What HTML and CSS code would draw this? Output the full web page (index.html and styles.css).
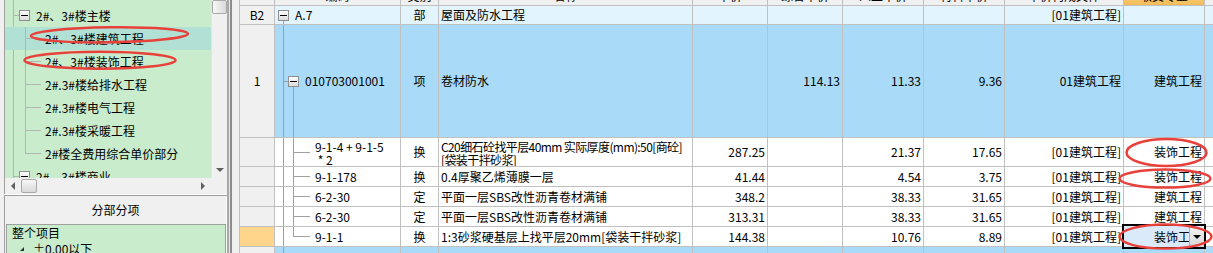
FILE: index.html
```html
<!DOCTYPE html>
<html>
<head>
    <meta charset="utf-8">
    <title>分部分项</title>
    <link rel="stylesheet" href="styles.css">
</head>
<body>
<div class="app">
    <aside class="side">
        <div class="tree-pane">
            <div class="tree-main">
                <div class="tree">
                    <div class="node root"><span class="toggle"></span>2#、3#楼主楼</div>
                    <div class="children">
                        <div class="node leaf sel">2#、3#楼建筑工程</div>
                        <div class="node leaf">2#、3#楼装饰工程</div>
                        <div class="node leaf">2#.3#楼给排水工程</div>
                        <div class="node leaf">2#.3#楼电气工程</div>
                        <div class="node leaf">2#.3#楼采暖工程</div>
                        <div class="node leaf">2#楼全费用综合单价部分</div>
                    </div>
                    <div class="node root"><span class="toggle"></span>2#、3#楼商业</div>
                </div>
                <div class="vscroll">
                    <div class="vthumb"></div>
                    <div class="vtrack"></div>
                    <div class="sbtn"><span class="arr-down"></span></div>
                </div>
            </div>
            <div class="hscroll">
                <div class="sbtn"><span class="arr-left"></span></div>
                <div class="hthumb"></div>
                <div class="htrack"></div>
                <div class="sbtn"><span class="arr-right"></span></div>
                <div class="corner"></div>
            </div>
        </div>
        <div class="side-gap"></div>
        <div class="fb-pane">
            <div class="fb-title">分部分项</div>
            <div class="fb-list">
                <div class="fb-item">整个项目</div>
                <div class="fb-item sub"><span class="arr-open"></span>±0.00以下</div>
            </div>
        </div>
    </aside>

    <div class="splitter"></div>

    <main class="grid">
        <div class="row head">
            <div class="cell c-rh"></div>
            <div class="cell c-code ctr">编码</div>
            <div class="cell c-type ctr">类别</div>
            <div class="cell c-name ctr">名称</div>
            <div class="cell c-n1 ctr">单价</div>
            <div class="cell c-n2 ctr">综合单价</div>
            <div class="cell c-n3 ctr">人工单价</div>
            <div class="cell c-n4 ctr">材料单价</div>
            <div class="cell c-file ctr">单价构成文件</div>
            <div class="cell c-spec ctr hd-on">取费专业</div>
            <div class="cell c-x"></div>
        </div>

        <div class="row sec">
            <div class="cell c-rh ctr">B2</div>
            <div class="cell c-code code-sec"><span class="toggle"></span>A.7</div>
            <div class="cell c-type ctr">部</div>
            <div class="cell c-name">屋面及防水工程</div>
            <div class="cell c-n1"></div>
            <div class="cell c-n2"></div>
            <div class="cell c-n3"></div>
            <div class="cell c-n4"></div>
            <div class="cell c-file num">[01建筑工程]</div>
            <div class="cell c-spec"></div>
            <div class="cell c-x"></div>
        </div>

        <div class="row item">
            <div class="cell c-rh ctr">1</div>
            <div class="cell c-code code-item"><span class="toggle"></span>010703001001</div>
            <div class="cell c-type ctr">项</div>
            <div class="cell c-name">卷材防水</div>
            <div class="cell c-n1"></div>
            <div class="cell c-n2 num">114.13</div>
            <div class="cell c-n3 num">11.33</div>
            <div class="cell c-n4 num">9.36</div>
            <div class="cell c-file num">01建筑工程</div>
            <div class="cell c-spec num">建筑工程</div>
            <div class="cell c-x"></div>
        </div>

        <div class="row tall">
            <div class="cell c-rh"></div>
            <div class="cell c-code code-leaf wrap">9-1-4 + 9-1-5<br>&nbsp;* 2</div>
            <div class="cell c-type ctr">换</div>
            <div class="cell c-name wrap tight">C20细石砼找平层40mm 实际厚度(mm):50[商砼]<br>[袋装干拌砂浆]</div>
            <div class="cell c-n1 num">287.25</div>
            <div class="cell c-n2"></div>
            <div class="cell c-n3 num">21.37</div>
            <div class="cell c-n4 num">17.65</div>
            <div class="cell c-file num">[01建筑工程]</div>
            <div class="cell c-spec num">装饰工程</div>
            <div class="cell c-x"></div>
        </div>

        <div class="row">
            <div class="cell c-rh"></div>
            <div class="cell c-code code-leaf">9-1-178</div>
            <div class="cell c-type ctr">换</div>
            <div class="cell c-name">0.4厚聚乙烯薄膜一层</div>
            <div class="cell c-n1 num">41.44</div>
            <div class="cell c-n2"></div>
            <div class="cell c-n3 num">4.54</div>
            <div class="cell c-n4 num">3.75</div>
            <div class="cell c-file num">[01建筑工程]</div>
            <div class="cell c-spec num">装饰工程</div>
            <div class="cell c-x"></div>
        </div>

        <div class="row">
            <div class="cell c-rh"></div>
            <div class="cell c-code code-leaf">6-2-30</div>
            <div class="cell c-type ctr">定</div>
            <div class="cell c-name">平面一层SBS改性沥青卷材满铺</div>
            <div class="cell c-n1 num">348.2</div>
            <div class="cell c-n2"></div>
            <div class="cell c-n3 num">38.33</div>
            <div class="cell c-n4 num">31.65</div>
            <div class="cell c-file num">[01建筑工程]</div>
            <div class="cell c-spec num">建筑工程</div>
            <div class="cell c-x"></div>
        </div>

        <div class="row">
            <div class="cell c-rh"></div>
            <div class="cell c-code code-leaf">6-2-30</div>
            <div class="cell c-type ctr">定</div>
            <div class="cell c-name">平面一层SBS改性沥青卷材满铺</div>
            <div class="cell c-n1 num">313.31</div>
            <div class="cell c-n2"></div>
            <div class="cell c-n3 num">38.33</div>
            <div class="cell c-n4 num">31.65</div>
            <div class="cell c-file num">[01建筑工程]</div>
            <div class="cell c-spec num">建筑工程</div>
            <div class="cell c-x"></div>
        </div>

        <div class="row">
            <div class="cell c-rh cur"></div>
            <div class="cell c-code code-last">9-1-1</div>
            <div class="cell c-type ctr">换</div>
            <div class="cell c-name">1:3砂浆硬基层上找平层20mm[袋装干拌砂浆]</div>
            <div class="cell c-n1 num">144.38</div>
            <div class="cell c-n2"></div>
            <div class="cell c-n3 num">10.76</div>
            <div class="cell c-n4 num">8.89</div>
            <div class="cell c-file num">[01建筑工程]</div>
            <div class="cell c-spec edit">
                <div class="combo">装饰工程<span class="combo-btn"><span class="arr-down dark"></span></span></div>
            </div>
            <div class="cell c-x"></div>
        </div>

        <div class="row item">
            <div class="cell c-rh"></div>
            <div class="cell c-code code-cont"></div>
            <div class="cell c-type"></div>
            <div class="cell c-name"></div>
            <div class="cell c-n1"></div>
            <div class="cell c-n2"></div>
            <div class="cell c-n3"></div>
            <div class="cell c-n4"></div>
            <div class="cell c-file"></div>
            <div class="cell c-spec"></div>
            <div class="cell c-x"></div>
        </div>
    </main>

    <!-- 手绘标注 -->
    <svg class="marks" width="1213" height="253" viewBox="0 0 1213 253">
        <ellipse cx="109.5" cy="34.8" rx="78.5" ry="7.5" transform="rotate(-0.8 109.5 34.8)"/>
        <ellipse cx="100" cy="60.3" rx="75.5" ry="8.5"/>
        <ellipse cx="1166.5" cy="152.5" rx="40" ry="13.5"/>
        <ellipse cx="1165" cy="178.6" rx="45.5" ry="9"/>
        <ellipse cx="1165.5" cy="236.6" rx="46" ry="12"/>
    </svg>
</div>
</body>
</html>
```

FILE: styles.css
```css
* {
    margin: 0;
    padding: 0;
    box-sizing: border-box;
}

body {
    width: 1213px;
    height: 253px;
    overflow: hidden;
    background: #f0f0f0;
    font-family: "Noto Sans CJK SC", "Noto Sans", sans-serif;
    font-size: 12px;
    line-height: 14px;
    color: #000;
}

.app {
    position: relative;
    display: flex;
    height: 253px;
}

/* 左侧树 */
.side {
    width: 227px;
    flex: none;
    padding-left: 4px;
    display: flex;
    flex-direction: column;
}

.tree-pane {
    border-left: 1px solid #a0a0a0;
}

.tree-main {
    display: flex;
    height: 178px;
}

.tree {
    flex: 1;
    padding-top: 4px;
    overflow: hidden;
    background: linear-gradient(#b4b4b4, #b4b4b4) 8px 0 / 1px 100% no-repeat, #c9eccc;
}

.node {
    height: 23px;
    display: flex;
    align-items: center;
    white-space: nowrap;
}

.node.root {
    padding-left: 14px;
    background: linear-gradient(#b4b4b4, #b4b4b4) 8px 50% / 6px 1px no-repeat;
}

.toggle {
    width: 11px;
    height: 11px;
    flex: none;
    border: 1px solid #8e8f8f;
    background: linear-gradient(#ffffff, #dcdcdc);
    display: flex;
    align-items: center;
    justify-content: center;
    margin-right: 6px;
}

.toggle::before {
    content: "";
    width: 7px;
    height: 1px;
    background: #000;
}

.children {
    background: linear-gradient(#b4b4b4, #b4b4b4) 20px 0 / 1px calc(100% - 11px) no-repeat;
}

.node.leaf {
    padding-left: 40px;
    background: linear-gradient(#b4b4b4, #b4b4b4) 20px 50% / 16px 1px no-repeat;
}

.node.leaf.sel {
    background:
        linear-gradient(#b4b4b4, #b4b4b4) 20px 50% / 16px 1px no-repeat,
        linear-gradient(#b4b4b4, #b4b4b4) 20px 0 / 1px 100% no-repeat,
        #b1e1d4;
}

/* 滚动条 */
.vscroll {
    width: 16px;
    display: flex;
    flex-direction: column;
    background: #f0f0f0;
    border-left: 1px solid #e4e4e4;
}

.vthumb {
    height: 14px;
    border: 1px solid #a9a9a9;
    border-radius: 2px;
    background: linear-gradient(to right, #f7f7f7, #d9d9d9);
}

.vtrack,
.htrack {
    flex: 1;
}

.sbtn {
    width: 16px;
    height: 16px;
    display: flex;
    align-items: center;
    justify-content: center;
}

.hscroll {
    height: 16px;
    display: flex;
    background: #f0f0f0;
}

.hthumb {
    width: 16px;
    margin: 1px 0;
    border: 1px solid #a9a9a9;
    border-radius: 2px;
    background: linear-gradient(#f7f7f7, #d9d9d9);
}

.corner {
    width: 16px;
}

.arr-down {
    border-left: 4px solid transparent;
    border-right: 4px solid transparent;
    border-top: 4px solid #606060;
}

.arr-down.dark {
    border-top-color: #000;
}

.arr-left {
    border-top: 4px solid transparent;
    border-bottom: 4px solid transparent;
    border-right: 4px solid #606060;
}

.arr-right {
    border-top: 4px solid transparent;
    border-bottom: 4px solid transparent;
    border-left: 4px solid #606060;
}

.side-gap {
    height: 7px;
    border-top: 1px solid #ffffff;
    border-bottom: 1px solid #a0a0a0;
    background: #c4dcc6;
}

/* 分部分项 */
.fb-pane {
    flex: 1;
    display: flex;
    flex-direction: column;
    border-left: 1px solid #a0a0a0;
    border-right: 1px solid #ffffff;
}

.fb-title {
    height: 28px;
    display: flex;
    align-items: center;
    justify-content: center;
}

.fb-list {
    flex: 1;
    margin-left: 1px;
    border: 1px solid #a0a0a0;
    background: #c9eccc;
    padding: 0 5px;
}

.fb-item {
    height: 16px;
    display: flex;
    align-items: center;
    white-space: nowrap;
}

.fb-item.sub {
    padding-left: 8px;
}

.arr-open {
    border-left: 4px solid transparent;
    border-bottom: 4px solid #333;
    margin-right: 9px;
}

.splitter {
    width: 12px;
    flex: none;
    background: linear-gradient(to right, #a8a8a8 0 2px, #e8e8e8 2px 3px, #8c8c8c 3px 5px, #f0f0f0 5px);
}

/* 表格 */
.grid {
    flex: 1;
    overflow: hidden;
    border-left: 1px solid #c0c0c0;
    background: #ffffff;
}

.row {
    display: flex;
    height: 20px;
    border-bottom: 1px solid #c0c0c0;
}

.row.head {
    margin-top: -14px;
    background: #f0f0f0;
}

.row.sec {
    height: 19px;
    background: #e2f4fd;
}

.row.item {
    height: 113px;
    background: #a9dbf8;
}

.row.tall {
    height: 29px;
}

.cell {
    flex: none;
    display: flex;
    align-items: center;
    padding: 0 2px;
    border-right: 1px solid #c0c0c0;
    white-space: nowrap;
    overflow: hidden;
}

.cell.ctr {
    justify-content: center;
}

.cell.num {
    justify-content: flex-end;
}

.cell.wrap {
    line-height: 13px;
    padding-top: 1px;
}

.cell.tight {
    letter-spacing: -0.6px;
}

.c-rh { width: 35px; background: #f0f0f0; }
.c-rh.cur { background: #ffd58b; }
.c-code { width: 126px; }
.c-type { width: 38px; }
.c-name { width: 254px; }
.c-n1 { width: 75px; }
.c-n2 { width: 75px; }
.c-n3 { width: 81px; }
.c-n4 { width: 81px; }
.c-file { width: 119px; }
.c-spec { width: 81px; }
.c-x { flex: 1; min-width: 20px; border-right: none; }

.hd-on {
    background: linear-gradient(#fbd995, #f3bd58);
}

/* 编码列的树线 */
.code-sec {
    padding-left: 3px;
    background: linear-gradient(#a0a0a0, #a0a0a0) 8px 100% / 1px 4px no-repeat;
}

.code-item {
    padding-left: 13px;
    background:
        linear-gradient(#a0a0a0, #a0a0a0) 8px 0 / 1px 100% no-repeat,
        linear-gradient(#a0a0a0, #a0a0a0) 8px 50% / 5px 1px no-repeat,
        linear-gradient(#a0a0a0, #a0a0a0) 18px 100% / 1px 50% no-repeat;
}

.code-leaf,
.code-last,
.code-cont {
    padding-left: 40px;
    background:
        linear-gradient(#a0a0a0, #a0a0a0) 8px 0 / 1px 100% no-repeat,
        linear-gradient(#a0a0a0, #a0a0a0) 18px 0 / 1px 100% no-repeat,
        linear-gradient(#a0a0a0, #a0a0a0) 18px 50% / 17px 1px no-repeat;
}

.code-last {
    background:
        linear-gradient(#a0a0a0, #a0a0a0) 8px 0 / 1px 100% no-repeat,
        linear-gradient(#a0a0a0, #a0a0a0) 18px 0 / 1px 50% no-repeat,
        linear-gradient(#a0a0a0, #a0a0a0) 18px 50% / 17px 1px no-repeat;
}

.code-cont {
    background: linear-gradient(#a0a0a0, #a0a0a0) 8px 0 / 1px 100% no-repeat;
}

/* 取费专业下拉编辑 */
.cell.edit {
    position: relative;
    overflow: visible;
}

.combo {
    position: absolute;
    top: -3px;
    bottom: -3px;
    left: -2px;
    right: -2px;
    z-index: 2;
    border: 2px solid #000;
    background: #dbeafb;
    display: flex;
    align-items: center;
    justify-content: flex-end;
    padding-right: 2px;
    overflow: hidden;
}

.combo-btn {
    position: absolute;
    right: 0;
    top: 1px;
    bottom: 0;
    width: 15px;
    background: linear-gradient(#f4f4f4, #d6d6d6);
    border-left: 1px solid #b0b0b0;
    display: flex;
    align-items: center;
    justify-content: center;
}

/* 红色标注圈 */
.marks {
    position: absolute;
    left: 0;
    top: 0;
    pointer-events: none;
    z-index: 5;
}

.marks ellipse {
    fill: none;
    stroke: #e8403a;
    stroke-width: 2.5;
}
```
